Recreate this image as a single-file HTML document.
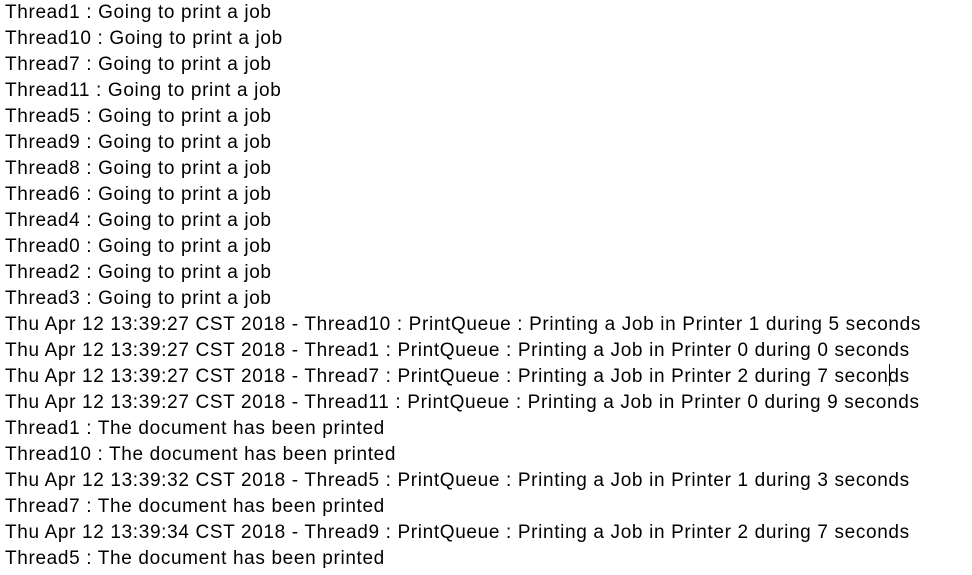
<!DOCTYPE html>
<html><head><meta charset="utf-8"><style>
html,body{margin:0;padding:0;background:#fff;width:972px;height:575px;overflow:hidden}
.w{position:absolute;left:5px;top:0px;font-family:"Liberation Sans","Noto Sans CJK SC",sans-serif;font-size:19px;line-height:26px;color:#000;white-space:pre;letter-spacing:0.65px}
.c{position:absolute;left:889px;top:364px;width:1px;height:22px;background:#000}
</style></head><body>
<div class="w">Thread1 : Going to print a job
Thread10 : Going to print a job
Thread7 : Going to print a job
Thread11 : Going to print a job
Thread5 : Going to print a job
Thread9 : Going to print a job
Thread8 : Going to print a job
Thread6 : Going to print a job
Thread4 : Going to print a job
Thread0 : Going to print a job
Thread2 : Going to print a job
Thread3 : Going to print a job
Thu Apr 12 13:39:27 CST 2018 - Thread10 : PrintQueue : Printing a Job in Printer 1 during 5 seconds
Thu Apr 12 13:39:27 CST 2018 - Thread1 : PrintQueue : Printing a Job in Printer 0 during 0 seconds
Thu Apr 12 13:39:27 CST 2018 - Thread7 : PrintQueue : Printing a Job in Printer 2 during 7 seconds
Thu Apr 12 13:39:27 CST 2018 - Thread11 : PrintQueue : Printing a Job in Printer 0 during 9 seconds
Thread1 : The document has been printed
Thread10 : The document has been printed
Thu Apr 12 13:39:32 CST 2018 - Thread5 : PrintQueue : Printing a Job in Printer 1 during 3 seconds
Thread7 : The document has been printed
Thu Apr 12 13:39:34 CST 2018 - Thread9 : PrintQueue : Printing a Job in Printer 2 during 7 seconds
Thread5 : The document has been printed</div>
<div class="c"></div>
</body></html>
